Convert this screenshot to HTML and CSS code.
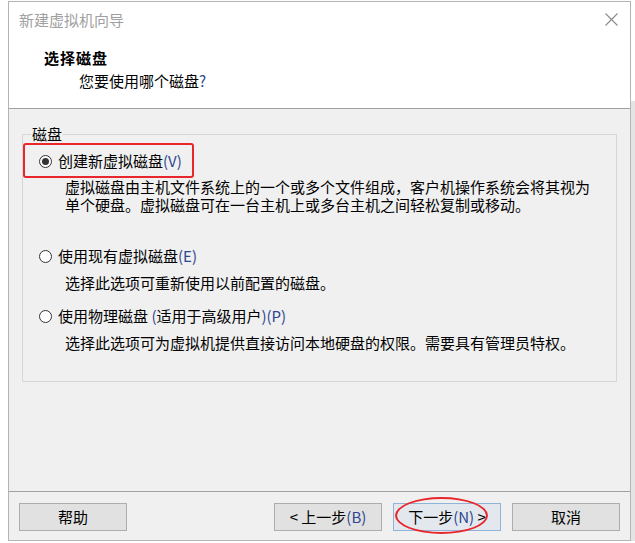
FILE: index.html
```html
<!DOCTYPE html>
<html lang="zh-CN">
<head>
  <meta charset="UTF-8" />
  <title>新建虚拟机向导</title>
  <link rel="stylesheet" href="styles.css">
</head>
<body>
  <div class="window">
    <div class="header">
      <div class="title-row">
        <span class="title">新建虚拟机向导</span>
        <svg class="close" width="13" height="13" viewBox="0 0 13 13">
          <path d="M0.5 0.5 L12.5 12.5 M12.5 0.5 L0.5 12.5" stroke="#8a8a8a" stroke-width="1.1" fill="none"/>
        </svg>
      </div>
      <div class="heading">选择磁盘</div>
      <div class="subheading">您要使用哪个磁盘<span class="key">?</span></div>
    </div>

    <div class="main">
      <fieldset class="group">
        <legend>磁盘</legend>

        <div class="option">
          <div class="radio-row">
            <span class="radio checked"></span>
            <span>创建新虚拟磁盘<span class="key">(V)</span></span>
            <span class="mark-box"></span>
          </div>
          <p class="desc">虚拟磁盘由主机文件系统上的一个或多个文件组成，客户机操作系统会将其视为<br>单个硬盘。虚拟磁盘可在一台主机上或多台主机之间轻松复制或移动。</p>
        </div>

        <div class="option option-2">
          <div class="radio-row">
            <span class="radio"></span>
            <span>使用现有虚拟磁盘<span class="key">(E)</span></span>
          </div>
          <p class="desc">选择此选项可重新使用以前配置的磁盘。</p>
        </div>

        <div class="option option-3">
          <div class="radio-row">
            <span class="radio"></span>
            <span>使用物理磁盘 <span class="key">(</span>适用于高级用户<span class="key">)(P)</span></span>
          </div>
          <p class="desc">选择此选项可为虚拟机提供直接访问本地硬盘的权限。需要具有管理员特权。</p>
        </div>
      </fieldset>
    </div>

    <div class="footer">
      <button class="btn btn-help">帮助</button>
      <button class="btn">&lt; 上一步<span class="key">(B)</span></button>
      <button class="btn btn-default">下一步<span class="key">(N)</span> &gt;<span class="mark-ellipse"></span></button>
      <button class="btn">取消</button>
    </div>
  </div>
  <div class="side-strip"></div>
</body>
</html>
```

FILE: styles.css
```css
* {
  margin: 0;
  padding: 0;
  box-sizing: border-box;
}

body {
  font-family: "Microsoft YaHei", "Noto Sans CJK SC", sans-serif;
  font-size: 15px;
  color: #000;
  background: #fff;
  display: flex;
  align-items: flex-start;
  padding: 1px 0 0 8px;
  height: 543px;
  overflow: hidden;
}

.window {
  width: 623px;
  height: 540px;
  border: 1px solid #b4b4b4;
  background: #f0f0f0;
  display: flex;
  flex-direction: column;
}

.side-strip {
  width: 4px;
  height: 440px;
  margin-top: 100px;
  background: #e4e4e4;
}

.header {
  height: 107px;
  background: #fff;
  border-bottom: 1px solid #a0a0a0;
  padding-top: 8px;
}

.title-row {
  display: flex;
  justify-content: space-between;
  align-items: flex-start;
  padding: 0 12px 0 10px;
  line-height: 20px;
}

.title {
  color: #a0a0a0;
}

.close {
  margin-top: 3px;
}

.heading {
  margin-top: 18px;
  padding-left: 35px;
  font-size: 15px;
  font-weight: bold;
  letter-spacing: 1px;
  line-height: 20px;
}

.subheading {
  margin-top: 3px;
  padding-left: 70px;
  line-height: 20px;
}

.key {
  color: #2f4690;
}

.main {
  flex: 1;
}

.group {
  margin: 17px 13px 0;
  padding: 10px 12px 29px 16px;
  border: 1px solid #d6d6d6;
  min-width: 0;
}

.group legend {
  margin-left: -8px;
  padding: 0 1px;
  line-height: 16px;
}

.radio-row {
  position: relative;
  display: flex;
  align-items: center;
  gap: 6px;
  line-height: 18px;
}

.radio {
  width: 13px;
  height: 13px;
  border: 1px solid #333;
  border-radius: 50%;
  background: #fff;
  display: flex;
  align-items: center;
  justify-content: center;
}

.radio.checked::after {
  content: '';
  width: 7px;
  height: 7px;
  border-radius: 50%;
  background: #333;
}

.desc {
  margin: 8px 0 0 26px;
  line-height: 18px;
}

.option-2 {
  margin-top: 33px;
}

.option-3 {
  margin-top: 15px;
}

.option-2 .desc,
.option-3 .desc {
  margin-top: 9px;
}

.mark-box {
  position: absolute;
  left: -16px;
  top: -9px;
  width: 171px;
  height: 35px;
  border: 2px solid #e8262b;
  border-radius: 3px;
}

.footer {
  height: 49px;
  border-top: 1px solid #a0a0a0;
  display: flex;
  align-items: flex-start;
  gap: 11px;
  padding: 11px 10px 0;
}

.btn {
  position: relative;
  width: 108px;
  height: 28px;
  font-family: inherit;
  font-size: 15px;
  line-height: 26px;
  color: #000;
  background: #e1e1e1;
  border: 1px solid #adadad;
}

.btn-help {
  margin-right: auto;
}

.btn-default {
  background: #e3e8ee;
  border-color: #8fb4da;
}

.mark-ellipse {
  position: absolute;
  left: 1px;
  top: -7px;
  width: 93px;
  height: 37px;
  border: 2px solid #e8262b;
  border-radius: 50%;
}
```
